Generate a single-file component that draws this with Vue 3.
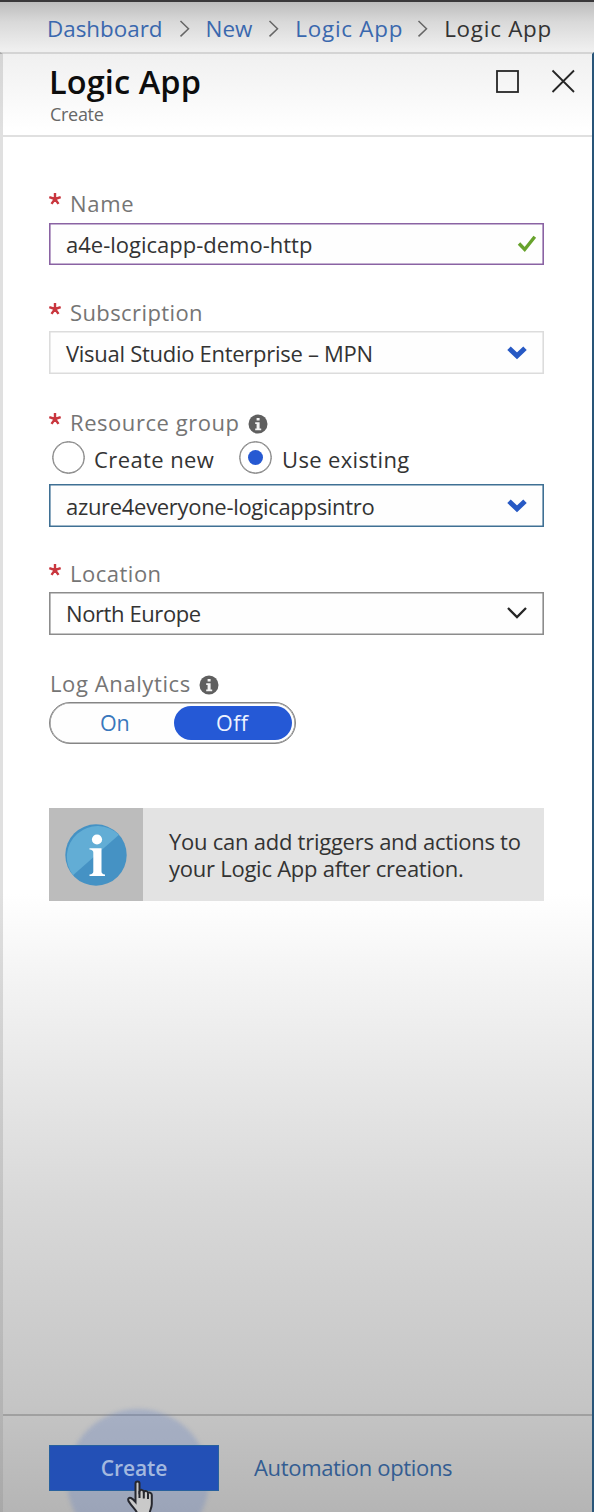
<script setup>
const crumbs = ['Dashboard', 'New', 'Logic App']
</script>

<template>
  <div class="page">
    <nav class="crumbs">
      <template v-for="(c, i) in crumbs" :key="i">
        <a :class="'c' + i">{{ c }}</a>
        <svg class="sep" width="12" height="20" viewBox="0 0 12 20"><path d="M1.5 2 L9.5 9.7 L1.5 17.4" /></svg>
      </template>
      <span class="here">Logic App</span>
    </nav>
    <main class="blade">
      <header class="head">
        <div class="titles">
          <h1>Logic App</h1>
          <p>Create</p>
        </div>
        <svg class="winicons" width="82" height="26" viewBox="0 0 82 26">
          <rect x="2" y="3" width="21" height="21" />
          <path d="M57.5 2.5 L79 24 M79 2.5 L57.5 24" />
        </svg>
      </header>

      <form class="form">
        <div class="label name-label"><svg class="star" viewBox="-7 -7 14 14"><path d="M0 0V-6M0 0L5.7 -1.9M0 0L3.5 4.9M0 0L-3.5 4.9M0 0L-5.7 -1.9" /></svg><span class="t-name">Name</span></div>
        <div class="box name">
          <span class="v-name">a4e-logicapp-demo-http</span>
          <svg class="check" width="20" height="18" viewBox="0 0 20 18"><path d="M2 8.5 L7.7 14.5 L17.8 1.8" /></svg>
        </div>

        <div class="label sub-label"><svg class="star" viewBox="-7 -7 14 14"><path d="M0 0V-6M0 0L5.7 -1.9M0 0L3.5 4.9M0 0L-3.5 4.9M0 0L-5.7 -1.9" /></svg><span class="t-sub">Subscription</span></div>
        <div class="box sub">
          <span class="v-sub">Visual Studio Enterprise – MPN</span>
          <svg class="chev" width="20" height="14" viewBox="0 0 20 14"><path class="bold" d="M2 2.2 L10 9.8 L18 2.2" /></svg>
        </div>

        <div class="label res-label"><svg class="star" viewBox="-7 -7 14 14"><path d="M0 0V-6M0 0L5.7 -1.9M0 0L3.5 4.9M0 0L-3.5 4.9M0 0L-5.7 -1.9" /></svg><span class="t-res">Resource group</span>
          <svg class="info" viewBox="0 0 20 20"><circle cx="10" cy="10" r="9.5" /><path d="M8.6 4h3v2.6h-3zM7.2 8.2h4.4v6.3h1.6v1.7h-6v-1.7h1.4v-4.6h-1.4z" /></svg>
        </div>
        <div class="radios">
          <i class="radio"></i><span class="r-new">Create new</span>
          <i class="radio on"></i><span class="r-use">Use existing</span>
        </div>
        <div class="box res">
          <span class="v-res">azure4everyone-logicappsintro</span>
          <svg class="chev" width="20" height="14" viewBox="0 0 20 14"><path class="bold" d="M2 2.2 L10 9.8 L18 2.2" /></svg>
        </div>

        <div class="label loc-label"><svg class="star" viewBox="-7 -7 14 14"><path d="M0 0V-6M0 0L5.7 -1.9M0 0L3.5 4.9M0 0L-3.5 4.9M0 0L-5.7 -1.9" /></svg><span class="t-loc">Location</span></div>
        <div class="box loc">
          <span class="v-loc">North Europe</span>
          <svg class="chev" width="20" height="14" viewBox="0 0 20 14"><path class="thin" d="M1 2 L10 11 L19 2" /></svg>
        </div>

        <div class="label log-label"><span class="t-log">Log Analytics</span>
          <svg class="info" viewBox="0 0 20 20"><circle cx="10" cy="10" r="9.5" /><path d="M8.6 4h3v2.6h-3zM7.2 8.2h4.4v6.3h1.6v1.7h-6v-1.7h1.4v-4.6h-1.4z" /></svg>
        </div>
        <div class="toggle"><span class="opt">On</span><span class="opt sel">Off</span></div>

        <section class="notice">
          <div class="pic">
            <svg width="62" height="62" viewBox="0 0 62 62">
              <circle cx="31" cy="31" r="30.7" fill="#4592c4" />
              <path d="M8 51.2 A30.7 30.7 0 0 1 54 10.8 Z" fill="#62add5" />
              <circle cx="32" cy="15.5" r="5.1" fill="#fff" />
              <path d="M24.5 24.2 H36.5 V47.5 Q36.5 50 40 50.6 V52 H24.5 V50.6 Q28.3 50 28.3 47.5 V28.5 Q28.3 26 24.5 25.6 Z" fill="#fff" />
            </svg>
          </div>
          <p>You can add triggers and actions to<br>your Logic App after creation.</p>
        </section>
      </form>

      <footer class="foot">
        <i class="halo"></i>
        <button type="button" class="create">Create</button>
        <a class="auto">Automation options</a>
        <svg class="hand" width="30" height="38" viewBox="0 0 30 38">
          <path d="M9.5 3.5 C9.5 0.8 13.5 0.8 13.5 3.5 V11 C14.5 9.2 17.5 9.6 17.8 11.8 C19 10.4 21.8 11 22 13 C23.5 12 25.8 13 25.8 15 V24 C25.8 28 23.5 31 23.5 34 H11.5 C10.5 30 6 27 3.5 22.5 C1 19.5 2.5 17 5 18 C7 18.8 8.3 20.5 9.5 22 Z" />
          <path d="M13.5 11 V18 M17.8 12 V18.5 M22 13.5 V19" />
        </svg>
      </footer>
    </main>
  </div>
</template>

<style>
html, body { margin: 0; background: #b5b5b5; overflow: hidden; }
</style>

<style scoped>
* { box-sizing: border-box; }
.page {
  width: 594px; height: 1512px; overflow: hidden; display: flex; flex-direction: column;
  font-family: "Open Sans", "Noto Sans", sans-serif; font-size: 22px; color: #333; white-space: nowrap;
  border-top: 2px solid #39383a;
}
.crumbs {
  height: 50px; padding: 3px 0 0 47px; display: flex; align-items: center; flex: none;
  background: linear-gradient(#bdbdbd, #d9d9d9 40%, #efefef 95%); font-size: 22.4px;
}
.crumbs a { color: #3a68ae; }
.crumbs .c2 { letter-spacing: .75px; margin-right: -2px; }
.here { letter-spacing: .75px; }
.sep { flex: none; margin: 0 15px 0 16px; }
.sep path { fill: none; stroke: #666; stroke-width: 1.5; }
.blade {
  height: 1460px; display: flex; flex-direction: column;
  border: solid; border-width: 2px 2px 0 3px; border-color: #d4d4d4 #285579 #cfcfcf rgba(130, 130, 130, .25);
  background: linear-gradient(#f0f0f0, #fff 75px, #fff 840px, #f4f4f4 920px, #d8d8d8 1150px, #c5c5c5 1350px, #b5b5b5 1458px);
}
.head { height: 83px; flex: none; display: flex; justify-content: space-between; border-bottom: 2px solid #e0e0e0; padding: 0 15px 0 47px; }
h1 { margin: 5px 0 0 -1px; font-size: 32.5px; line-height: 45px; font-weight: 600; color: #0d0d0d; letter-spacing: .1px; }
.titles p { margin: 0; font-size: 18px; line-height: 20px; color: #666; letter-spacing: -.3px; }
.winicons { margin-top: 14px; fill: none; stroke: #262626; stroke-width: 1.8; }
.form { flex: 1; padding: 0 48px 0 46px; }
.label { display: flex; align-items: center; color: #757575; }
.star { width: 14px; height: 14px; margin: -7px 8px 0 -1px; stroke: #c9363e; stroke-width: 2.4; }
.box { --line: #dcdcdc; display: flex; align-items: center; justify-content: space-between; padding: 0 16px; height: 43px; border: 1px solid var(--line); box-shadow: inset 0 0 0 .6px var(--line); background: #fefefe; }
.name-label { height: 41px; margin-top: 45px; }
.name { height: 42px; --line: #8a63a3; padding: 0 6px 1px 16px; }
.res { --line: #3f7094; }
.loc { --line: #8c8c8c; padding-bottom: 1px; }
.t-name { letter-spacing: .7px; }
.t-sub { letter-spacing: .4px; }
.t-res { letter-spacing: .55px; }
.t-loc { letter-spacing: .5px; }
.t-log { letter-spacing: .6px; margin-left: 1px; }
.v-sub { letter-spacing: -.28px; }
.v-res { letter-spacing: -.31px; }
.v-loc { letter-spacing: -.4px; }
.check path { fill: none; stroke: #67a22c; stroke-width: 3.4; }
.chev path { fill: none; }
.bold { stroke: #2759c4; stroke-width: 5; }
.thin { stroke: #262626; stroke-width: 2.3; }
.sub-label { height: 38px; margin-top: 28px; }
.res-label { height: 38px; margin-top: 29px; }
.info { width: 20px; height: 20px; margin: 3px 0 0 8px; }
.info circle { fill: #5f5f5f; }
.info path { fill: #f4f4f4; }
.radios { display: flex; align-items: center; height: 43px; padding-left: 3px; }
.radio { width: 33px; height: 33px; border: 1px solid #858585; box-shadow: inset 0 0 0 .5px #858585; border-radius: 50%; margin: -10px 9px 0 0; display: grid; place-items: center; }
.radio.on::after { content: ""; width: 15px; height: 15px; border-radius: 50%; background: #2659d2; }
.r-new { width: 145px; margin-top: -7px; letter-spacing: .4px; }
.r-use { margin: -7px 0 0 1px; letter-spacing: .35px; }
.loc-label { height: 38px; margin-top: 27px; }
.log-label { height: 38px; margin-top: 29px; }
.toggle { width: 247px; height: 42px; border: 1px solid #858585; box-shadow: inset 0 0 0 .6px #858585; border-radius: 21px; padding: 3px; display: flex; background: #fefefe; font-size: 21.5px; }
.opt { width: 122px; display: grid; place-items: center; color: #3977bc; padding: 0 0 1px 2px; letter-spacing: -.2px; }
.sel { width: 118px; background: #2559d6; color: #eef3ff; border-radius: 17px; padding: 0 2px 1px 0; letter-spacing: .4px; }
.notice { margin-top: 64px; width: 495px; height: 93px; display: flex; background: #e3e3e3; }
.pic { width: 94px; background: #bcbcbc; display: grid; place-items: center; }
.notice p { margin: 20px 0 0 26px; line-height: 27px; letter-spacing: -.25px; }
.foot { position: relative; flex: none; height: 98px; border-top: 2px solid #a0a0a0; display: flex; padding: 29px 0 0 46px; }
.create { position: relative; width: 170px; height: 46px; padding: 0; border: 1px solid #28619e; background: #2350b6; color: #a3b9df; font: 600 21px "Open Sans", sans-serif; letter-spacing: -.1px; }
.auto { margin-left: 35px; line-height: 45px; color: #335d92; letter-spacing: -.33px; }
.halo { position: absolute; left: 64px; top: -7px; width: 142px; height: 142px; border-radius: 50%; background: rgba(78, 116, 197, .25); filter: blur(2px); }
.hand { position: absolute; left: 123px; top: 64px; }
.hand path { fill: #c9c9c9; stroke: #26272e; stroke-width: 2; }
.hand path + path { fill: none; }
</style>
